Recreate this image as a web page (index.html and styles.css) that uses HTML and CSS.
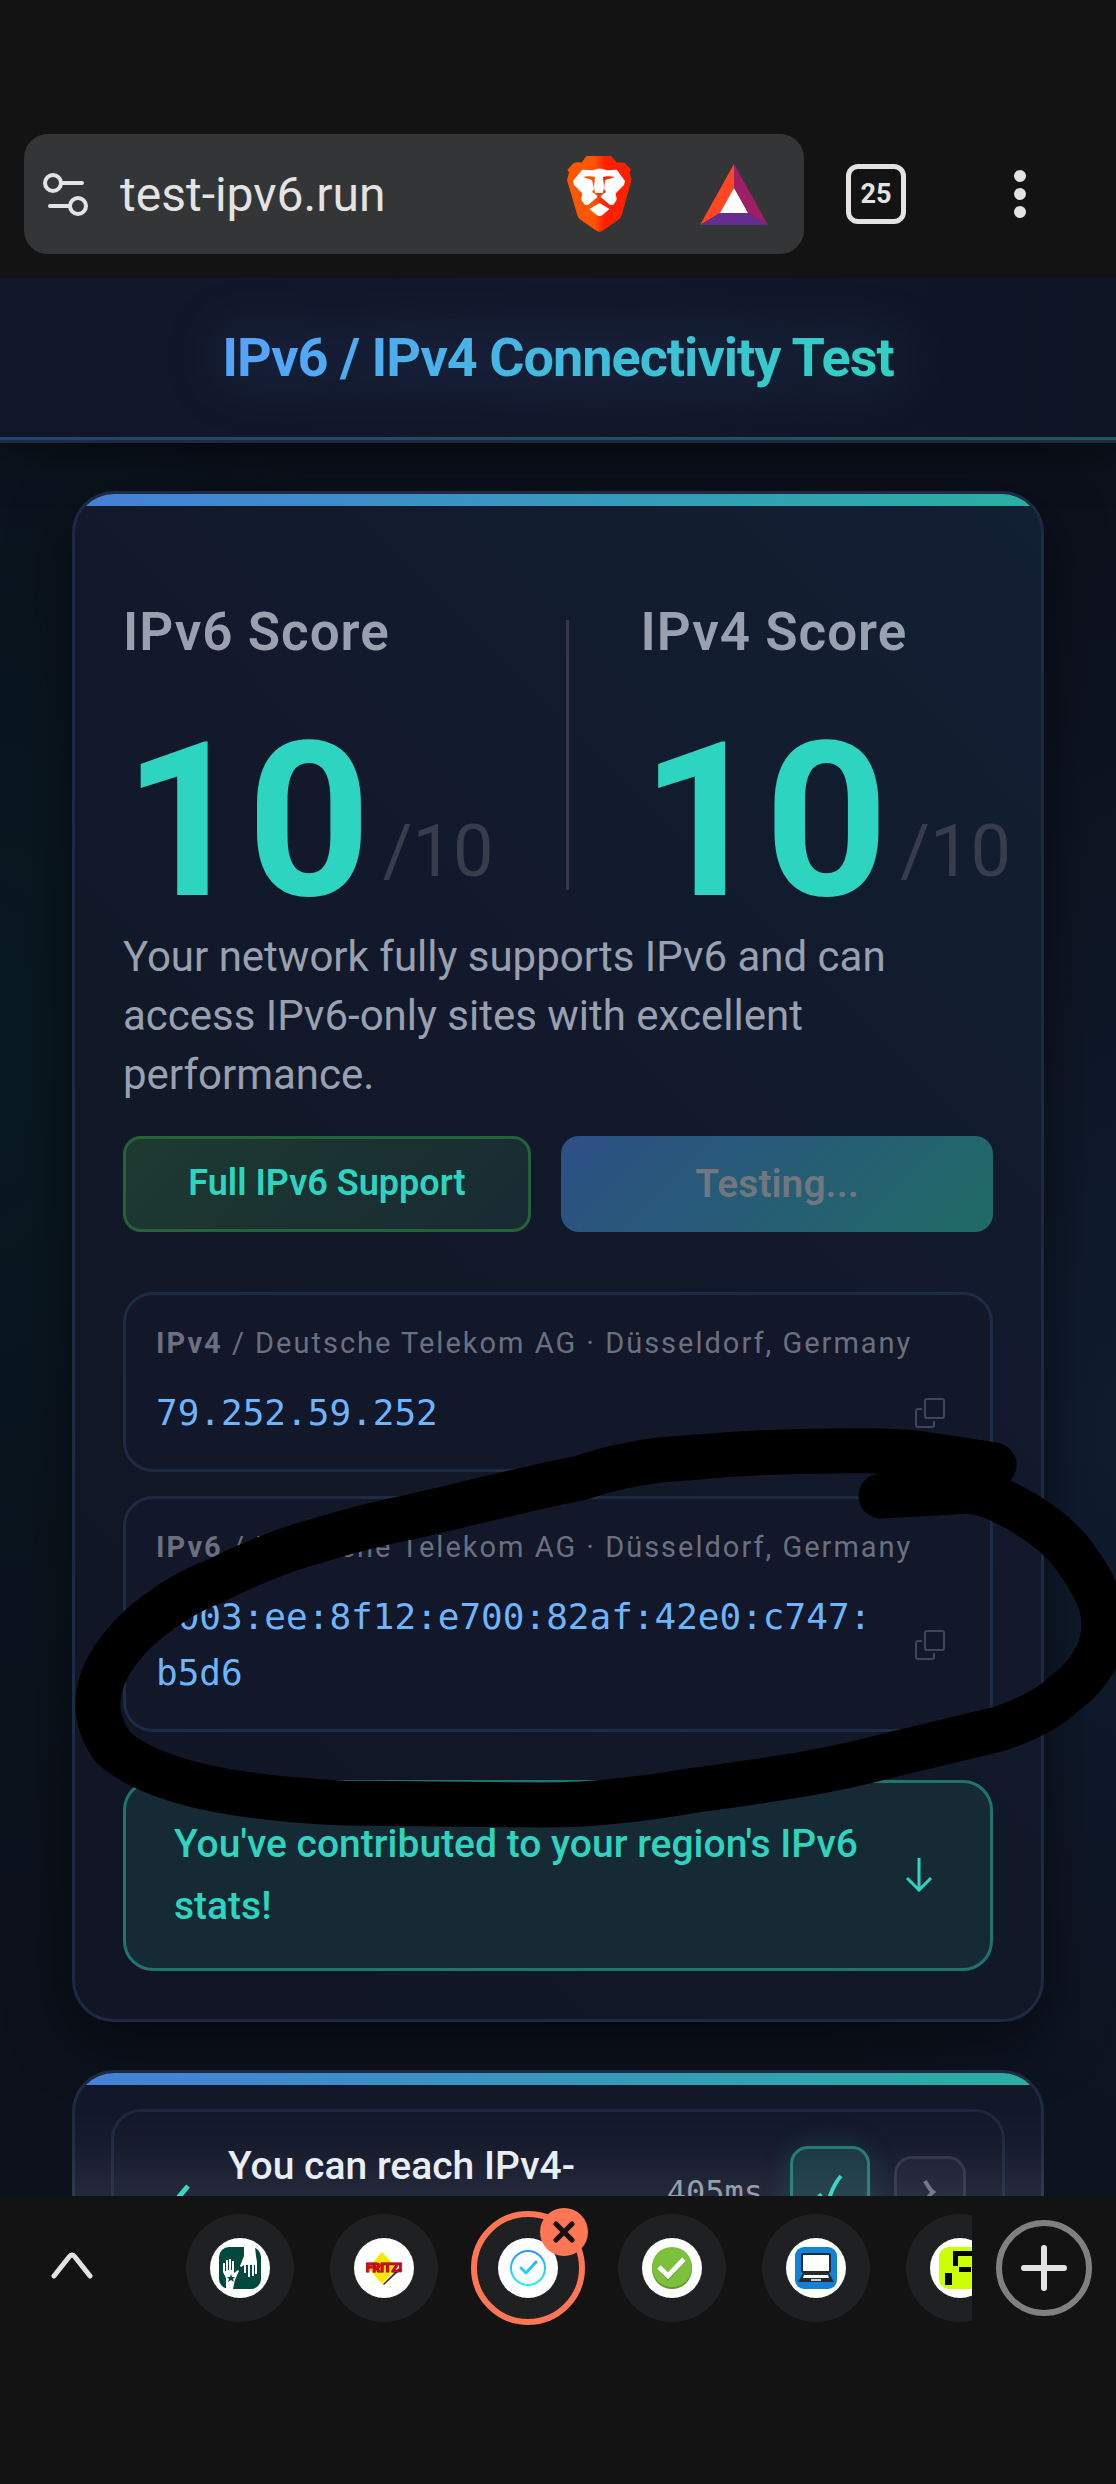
FILE: index.html
```html
<!DOCTYPE html>
<html lang="en">
<head>
<meta charset="utf-8">
<meta name="viewport" content="width=device-width, initial-scale=1">
<title>IPv6 / IPv4 Connectivity Test</title>
<link rel="stylesheet" href="styles.css">
</head>
<body>
<div class="toolbar">
  <div class="address-bar">
    <svg class="site-icon" viewBox="0 0 48 44" fill="none" stroke="#e3e3e3" stroke-width="4" stroke-linecap="round">
      <circle cx="11" cy="11" r="8"/><path d="M19 11h21M8 34h20"/><circle cx="36" cy="34" r="8"/>
    </svg>
    <input class="url" type="text" value="test-ipv6.run" aria-label="Address">
    <button class="bar-button" aria-label="Shields">
      <svg width="66" height="76" viewBox="0 0 66 76">
        <defs><linearGradient id="lion"><stop offset="0.42" stop-color="#ff5601"/><stop offset="0.58" stop-color="#ff2000"/></linearGradient></defs>
        <path fill="url(#lion)" d="M19.5 0H44l6 6.7c3-.8 6-.6 8 .6l6 6.5-1.500 3 2 7.200-9.500 34c-1 3-1.500 4-4 6L36 74.500q-3.500 2.500-7 0L14 64c-2.500-2-3-3-4-6L0 24l2-7.200-1.500-3 6-6.500c2-1.200 5-1.400 8-.6z"/>
        <path fill="#fff" d="M15 14c4-1 8 1 12 0q5.500-3 12 0c4 1 7-1 11 0l8 11-1 4-8 8c-1 3 2 5 0 8l-3 4h-3l-7-6c-3-2-3-3 0-5l3-2-2-3 1-9 10-3c-4-1-9-1-12 0 0 3 1 7 1 10l-1 6h-8l-1-6 1-10c-3-1-9-1-12 0l9 3 2 9-2 3 3 2c3 2 3 3 0 5l-7 6h-3l-3-4c-2-3 1-5 0-8l-8-8-1-4z"/>
        <path fill="#fff" d="M32.500 47l10 6-7 6q-3 2-6 0l-7-6z"/>
      </svg>
    </button>
    <button class="bar-button" aria-label="Rewards">
      <svg width="68" height="61" viewBox="0 0 68 61">
        <path fill="#ff4724" d="M34 0v24L20 49 0 61z"/><path fill="#9e1f63" d="M34 0l34 61-20-12-14-25z"/><path fill="#662d91" d="M0 61l20-12h28l20 12z"/><path fill="#fff" d="M34 24l14 25H20z"/>
      </svg>
    </button>
  </div>
  <button class="toolbar-button" aria-label="Open tabs"><span class="tab-count">25</span></button>
  <button class="toolbar-button" aria-label="Menu">
    <svg width="12" height="48" viewBox="0 0 12 48" fill="#e3e3e3"><circle cx="6" cy="6" r="6"/><circle cx="6" cy="24" r="6"/><circle cx="6" cy="42" r="6"/></svg>
  </button>
</div>

<div class="viewport">
  <header class="site-header"><h1 class="site-title">IPv6 / IPv4 Connectivity Test</h1></header>
  <main class="content">
    <section class="card summary">
      <div class="scores">
        <div class="score">
          <h2 class="score-label">IPv6 Score</h2>
          <p class="score-value">10<span class="score-max">/10</span></p>
        </div>
        <div class="divider"></div>
        <div class="score">
          <h2 class="score-label">IPv4 Score</h2>
          <p class="score-value">10<span class="score-max">/10</span></p>
        </div>
      </div>
      <p class="description">Your network fully supports IPv6 and can access IPv6-only sites with excellent performance.</p>
      <div class="actions">
        <span class="support-badge">Full IPv6 Support</span>
        <button class="test-button" disabled>Testing...</button>
      </div>
      <div class="ip-list">
        <div class="ip-box">
          <p class="ip-label"><b>IPv4</b> / Deutsche Telekom AG · Düsseldorf, Germany</p>
          <div class="ip-row">
            <span class="ip-address">79.252.59.252</span>
            <button class="copy-button" aria-label="Copy IPv4 address">
              <svg width="30" height="30" viewBox="0 0 30 30" fill="none" stroke="#414656" stroke-width="2"><rect x="10" y="1" width="19" height="19" rx="2"/><path d="M7 11H3q-2 0-2 2v14q0 2 2 2h14q2 0 2-2v-4"/></svg>
            </button>
          </div>
        </div>
        <div class="ip-box">
          <p class="ip-label"><b>IPv6</b> / Deutsche Telekom AG · Düsseldorf, Germany</p>
          <div class="ip-row">
            <span class="ip-address">2003:ee:8f12:e700:82af:42e0:c747:b5d6</span>
            <button class="copy-button" aria-label="Copy IPv6 address">
              <svg width="30" height="30" viewBox="0 0 30 30" fill="none" stroke="#414656" stroke-width="2"><rect x="10" y="1" width="19" height="19" rx="2"/><path d="M7 11H3q-2 0-2 2v14q0 2 2 2h14q2 0 2-2v-4"/></svg>
            </button>
          </div>
        </div>
      </div>
      <a class="stats-link" href="#stats">
        <span>You've contributed to your region's IPv6 stats!</span>
        <svg width="28" height="34" viewBox="0 0 28 34" fill="none" stroke="#2dd4bf" stroke-width="3"><path d="M14 0v32M2 20l12 12 12-12"/></svg>
      </a>
    </section>
    <section class="card results">
      <div class="result-row">
        <svg class="result-check" width="48" height="48" viewBox="0 0 48 48" fill="none" stroke="#2dd4bf" stroke-width="5"><path d="M38 10L18 34 8 24"/></svg>
        <p class="result-text">You can reach IPv4-</p>
        <span class="result-time">405ms</span>
        <button class="result-status" aria-label="Passed">
          <svg width="30" height="40" viewBox="0 0 30 40" fill="none" stroke="#2dd4bf" stroke-width="4"><path d="M26 4Q17 14 12 34L4 22"/></svg>
        </button>
        <button class="result-expand" aria-label="Details">
          <svg width="14" height="28" viewBox="0 0 14 28" fill="none" stroke="#6b7080" stroke-width="4"><path d="M2 3q5 9 8 11-3 2-8 11"/></svg>
        </button>
      </div>
    </section>
  </main>
  <svg class="scribble" viewBox="0 1420 1116 420" fill="none" stroke="#000" stroke-width="45" stroke-linecap="round" stroke-linejoin="round">
    <path d="M881 1496L970 1491C1000 1495 1050 1525 1072 1553C1092 1580 1104 1602 1104 1625C1104 1650 1090 1675 1065 1693C1045 1712 1020 1722 999 1729C960 1738 930 1746 898 1753C830 1772 770 1780 696 1790C650 1798 600 1805 543 1805L343 1803C280 1800 230 1793 200 1786C157 1776 130 1763 113 1747C102 1733 97 1715 98 1703C98 1685 105 1660 140 1627C160 1610 185 1592 213 1582C250 1563 290 1548 313 1542C345 1532 375 1524 410 1517C470 1503 530 1488 580 1478C620 1465 650 1460 686 1458C740 1453 790 1451 833 1451C880 1450 910 1451 930 1455L994 1465"/>
  </svg>
  <div class="fade"></div>
</div>

<nav class="tab-strip">
  <button class="strip-toggle" aria-label="Expand tabs">
    <svg width="42" height="28" viewBox="0 0 42 28" fill="none" stroke="#e3e3e3" stroke-width="5" stroke-linecap="round"><path d="M3 25L18 6q3-4 6 0l15 19"/></svg>
  </button>
  <div class="tabs">
    <button class="tab" aria-label="Tab 1"><span class="favicon">
      <svg width="42" height="42" viewBox="0 0 42 42"><rect width="42" height="42" rx="10" fill="#00493c"/><path fill="#fff" d="M25 0h11l1 9 1 6v12h-2v-9h-1v11h-2V18h-2v12h-2V18h-2v8h-2v-8l-3 2-1-1 4-10zM7 42V31L4 25V16h2v8h1V13h2v10h1V12h2v11h1V14h2v12l4-3 1 1-4 9-2 9z"/><path fill="#00493c" d="M12 27l1 3h3l-2 2 1 3-3-2-3 2 1-3-2-2h3z"/></svg>
    </span></button>
    <button class="tab" aria-label="Tab 2"><span class="favicon">
      <svg width="42" height="42" viewBox="0 0 42 42"><path fill="#333" d="M20 37l16-16v3L21 38z"/><path fill="#ffe500" d="M19 5l15 16-15 16L5 21z"/><text x="21" y="25" text-anchor="middle" class="logo-text">FRITZ!</text></svg>
    </span></button>
    <button class="tab tab-active" aria-label="Tab 3"><span class="favicon">
      <svg width="42" height="42" viewBox="0 0 42 42" fill="none" stroke="url(#ring)" stroke-width="2"><defs><linearGradient id="ring" x1="0" y1="0" x2="0" y2="42" gradientUnits="userSpaceOnUse"><stop stop-color="#2a8cff"/><stop offset="1" stop-color="#22fff0"/></linearGradient></defs><circle cx="21" cy="21" r="17"/><path d="M14 21l5 5 10-11" stroke-linecap="round" stroke-linejoin="round" stroke-width="3"/></svg>
    </span><span class="close-badge"><svg width="22" height="22" viewBox="0 0 22 22" stroke="#131313" stroke-width="5" stroke-linecap="round"><path d="M3 3l16 16M19 3L3 19"/></svg></span></button>
    <button class="tab" aria-label="Tab 4"><span class="favicon">
      <svg width="42" height="42" viewBox="0 0 42 42"><circle cx="21" cy="22" r="20" fill="#5c9a2b"/><circle cx="21" cy="20" r="20" fill="#7cc03c"/><path d="M9 21l8 9 16-18" fill="none" stroke="#4f8a23" stroke-width="5"/><path d="M8 20l9 9 16-17" fill="none" stroke="#fff" stroke-width="5"/></svg>
    </span></button>
    <button class="tab" aria-label="Tab 5"><span class="favicon">
      <svg width="42" height="42" viewBox="0 0 42 42"><rect width="42" height="42" rx="9" fill="#1083d8"/><rect x="7" y="7" width="28" height="18" rx="1" fill="#fff" stroke="#222b33" stroke-width="2"/><path fill="#222b33" d="M8 26h26l5 9H3z"/><path fill="#fff" d="M9 28h24l1 3H8z"/><path fill="#ccc" d="M16 32h10v2H16z"/></svg>
    </span></button>
    <button class="tab" aria-label="Tab 6"><span class="favicon">
      <svg width="42" height="42" viewBox="0 0 42 42"><rect width="42" height="42" rx="10" fill="#cf0"/><path d="M14 4h28v5H19v10h-5zM20 20h12v5H20zM6 26h7v12H6z"/></svg>
    </span></button>
  </div>
  <button class="new-tab" aria-label="New tab">
    <svg width="96" height="96" viewBox="0 0 96 96" fill="none" stroke-width="6"><circle cx="48" cy="48" r="45" stroke="#808080"/><path d="M48 28v40M28 48h40" stroke="#e3e3e3" stroke-linecap="round"/></svg>
  </button>
</nav>
</body>
</html>
```
FILE: styles.css
```css
* { box-sizing: border-box; }

body {
  margin: 0;
  height: 100vh;
  display: flex;
  flex-direction: column;
  background: #131313;
  color: #e3e3e3;
  font-family: Roboto, "Liberation Sans", sans-serif;
}

h1, h2, p { margin: 0; }

button {
  padding: 0;
  border: 0;
  background: none;
  font-family: inherit;
  display: flex;
  align-items: center;
  justify-content: center;
}

/* Browser toolbar */
.toolbar {
  display: flex;
  align-items: center;
  padding: 134px 24px 24px;
}

.address-bar {
  flex: 1;
  min-width: 0;
  height: 120px;
  display: flex;
  align-items: center;
  padding: 0 3px 0 18px;
  background: #343537;
  border-radius: 24px;
}

.site-icon {
  width: 48px;
  height: 44px;
  flex: none;
}

.url {
  flex: 1;
  min-width: 0;
  margin-left: 30px;
  padding: 0;
  border: 0;
  outline: 0;
  background: none;
  color: #e3e3e3;
  font-family: inherit;
  font-size: 48px;
}

.bar-button { width: 134px; height: 120px; flex: none; }

.toolbar-button { width: 144px; height: 120px; flex: none; }

.tab-count {
  width: 60px;
  height: 60px;
  border: 5px solid #e3e3e3;
  border-radius: 12px;
  color: #e3e3e3;
  font-size: 27px;
  font-weight: 700;
  line-height: 50px;
  text-align: center;
}

/* Web page */
.viewport {
  flex: 1;
  min-height: 0;
  position: relative;
  overflow: hidden;
  background:
    radial-gradient(ellipse 400px 900px at 100% 60%, rgba(18, 36, 60, 0.6), transparent),
    radial-gradient(ellipse 400px 900px at 0 40%, rgba(6, 30, 36, 0.6), transparent),
    #0c111c;
}

.site-header {
  position: relative;
  padding: 48px 24px 50px;
  border-bottom: 3px solid #1f2a42;
  background: linear-gradient(90deg, #111629, #12172a 50%, #0f1525);
  box-shadow: 0 6px 40px rgba(0, 0, 0, 0.5);
}

.site-header::after {
  content: "";
  position: absolute;
  inset: auto 0 0;
  height: 3px;
  background: linear-gradient(90deg, #24436f, #1c5a5a);
}

.site-title {
  width: fit-content;
  margin: 0 auto;
  font-size: 54px;
  font-weight: 700;
  line-height: 64px;
  letter-spacing: -1px;
  color: transparent;
  background: linear-gradient(135deg, #58a0ff, #2dd4bf);
  background-clip: text;
  filter: drop-shadow(0 0 30px rgba(72, 170, 255, 0.3));
}

.content {
  padding: 48px 72px;
  display: flex;
  flex-direction: column;
  gap: 48px;
}

.card {
  position: relative;
  overflow: hidden;
  border: 3px solid #1e2942;
  border-radius: 42px;
  background: #12172a;
}

.card::before {
  content: "";
  position: absolute;
  inset: 0 0 auto;
  height: 12px;
  background: linear-gradient(90deg, #4580d8, #2aafa2);
}

.summary {
  padding: 106px 48px 48px;
  background: linear-gradient(225deg, #122033, #12192c 40%, #111827 60%, #111526);
  box-shadow: 0 20px 60px rgba(0, 0, 0, 0.5);
}

.scores { display: flex; gap: 72px; }

.score { flex: none; }

.divider {
  width: 3px;
  flex: none;
  margin: 20px 0 37px;
  background: #343a4b;
}

.score-label {
  margin-bottom: 53px;
  color: #99a1b1;
  font-size: 53px;
  font-weight: 600;
  line-height: 64px;
  letter-spacing: 1px;
}

.score-value {
  display: flex;
  align-items: baseline;
  gap: 12px;
  color: #2dd4bf;
  font-size: 216px;
  font-weight: 700;
  line-height: 210px;
}

.score-max {
  align-self: flex-end;
  color: #373d4d;
  font-size: 72px;
  font-weight: 400;
  line-height: 72px;
  padding-bottom: 39px;
}

.description {
  color: #99a1b1;
  font-size: 42px;
  line-height: 59px;
}

.actions {
  display: grid;
  grid-template-columns: 408fr 432fr;
  gap: 30px;
  margin: 32px 0 60px;
}

.support-badge,
.test-button {
  height: 96px;
  border-radius: 18px;
  text-align: center;
}

.support-badge {
  border: 3px solid #24633a;
  background: linear-gradient(135deg, #1d3a30, #182a33);
  color: #2dd4bf;
  font-size: 36px;
  font-weight: 600;
  line-height: 88px;
}

.test-button {
  background: linear-gradient(135deg, #2d5085, #1f6a65);
  color: #71767f;
  font-size: 39px;
  font-weight: 600;
}

.ip-list {
  display: flex;
  flex-direction: column;
  gap: 24px;
  margin-bottom: 48px;
}

.ip-box {
  padding: 24px 45px 28px 30px;
  border: 3px solid #1e2b44;
  border-radius: 30px;
  background: #12172a;
}

.ip-label {
  margin-bottom: 18px;
  color: #6b7080;
  font-size: 29px;
  line-height: 48px;
  letter-spacing: 2px;
  white-space: nowrap;
}

.ip-row {
  display: flex;
  align-items: center;
  justify-content: space-between;
  gap: 30px;
}

.ip-address {
  color: #6cb6ff;
  font-family: "DejaVu Sans Mono", "Liberation Mono", monospace;
  font-size: 36px;
  line-height: 56px;
  overflow-wrap: anywhere;
}

.copy-button { flex: none; }

.stats-link {
  display: flex;
  align-items: center;
  justify-content: space-between;
  gap: 24px;
  padding: 30px 57px 31px 48px;
  border: 3px solid #1f746c;
  border-radius: 30px;
  background: #152a35;
  color: #2dd4bf;
  font-size: 39px;
  font-weight: 500;
  line-height: 62px;
  text-decoration: none;
}

.stats-link svg { flex: none; }

.results { padding: 36px; }

.result-row {
  display: flex;
  align-items: center;
  padding: 28px 36px;
  border: 3px solid #1d273e;
  border-radius: 30px;
  background: #12172a;
}

.result-check { flex: none; margin-top: 16px; }

.result-text {
  flex: 1;
  min-height: 104px;
  margin-left: 30px;
  color: #e8edf5;
  font-size: 39px;
  font-weight: 500;
  line-height: 52px;
}

.result-time {
  margin-right: 27px;
  color: #8f96a5;
  font-family: "DejaVu Sans Mono", "Liberation Mono", monospace;
  font-size: 32px;
}

.result-status {
  width: 80px;
  height: 92px;
  margin-right: 24px;
  border: 3px solid #1f7a70;
  border-radius: 18px;
  background: #173641;
  box-shadow: 0 0 30px rgba(45, 212, 191, 0.15);
}

.result-expand {
  width: 72px;
  height: 72px;
  border: 3px solid #2c3144;
  border-radius: 18px;
  background: #191d30;
}

/* Pen mark drawn over the page */
.scribble {
  position: absolute;
  left: 0;
  top: 1142px;
  width: 100%;
}

.fade {
  position: absolute;
  inset: auto 72px 0;
  height: 84px;
  background: linear-gradient(transparent, rgba(255, 255, 255, 0.02) 40%, rgba(255, 255, 255, 0.08));
}

/* Tab strip */
.tab-strip {
  flex: none;
  display: flex;
  height: 144px;
  margin-bottom: 144px;
}

.strip-toggle { width: 144px; height: 138px; margin-right: 24px; flex: none; }

.tabs { flex: 1; min-width: 0; display: flex; overflow: hidden; }

.tab {
  position: relative;
  flex: none;
  width: 108px;
  height: 108px;
  margin: 18px;
  border-radius: 50%;
  background: #1e2022;
}

.tab-active {
  width: 114px;
  height: 114px;
  margin: 15px;
  border: 6px solid #ff7654;
}

.favicon {
  display: flex;
  align-items: center;
  justify-content: center;
  width: 60px;
  height: 60px;
  border-radius: 50%;
  background: #fff;
}

.logo-text {
  fill: #e2001a;
  stroke: #5a0010;
  stroke-width: 1px;
  paint-order: stroke;
  font-size: 12px;
  font-weight: 900;
}

.close-badge {
  position: absolute;
  top: -9px;
  right: -9px;
  width: 48px;
  height: 48px;
  display: flex;
  align-items: center;
  justify-content: center;
  border-radius: 50%;
  background: #ff7654;
}

.new-tab { flex: none; width: 144px; }
```
